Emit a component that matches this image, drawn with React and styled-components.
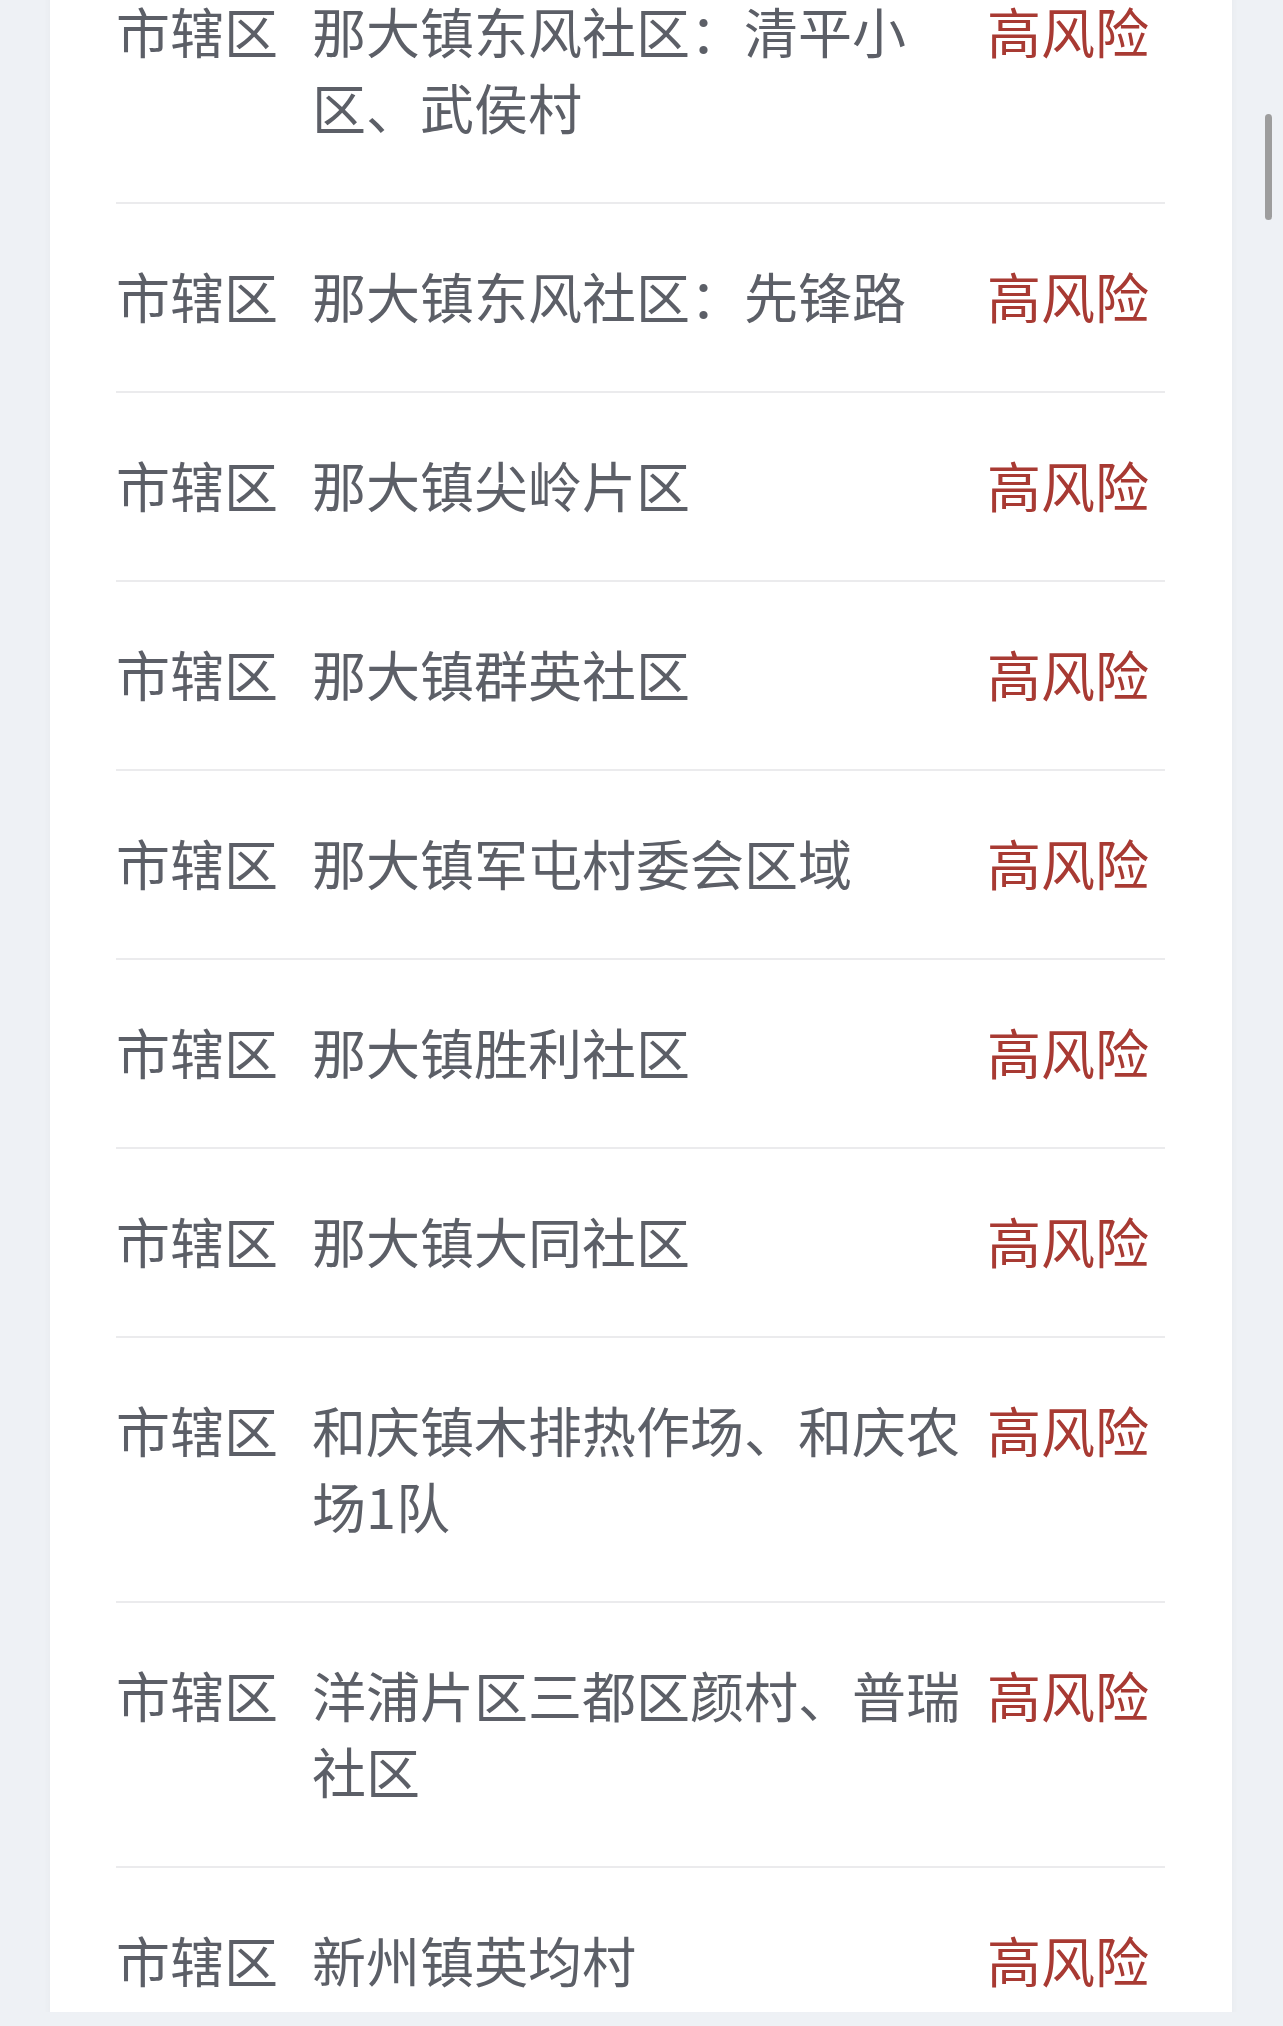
import React from "react";
import styled, { createGlobalStyle } from "styled-components";

const GlobalStyle = createGlobalStyle`
  html, body {
    margin: 0;
    padding: 0;
    background: #eef1f5;
  }
  body {
    font-family: "Noto Sans CJK SC", "Noto Sans", sans-serif;
  }
`;

const Page = styled.div`
  position: relative;
  height: 2026px;
  overflow: hidden;
  display: flex;
  flex-direction: column;
`;

const Viewport = styled.div`
  height: 2012px;
  overflow: hidden;
  padding: 0 51px 0 50px;
`;

const Card = styled.div`
  background: #ffffff;
  margin-top: -61px;
  padding: 0 67px 0 66px;
  box-shadow: 0 0 8px rgba(0, 0, 0, 0.04);
`;

const Row = styled.div`
  display: grid;
  grid-template-columns: 196px 675px 1fr;
  padding: 54px 0 57px;
  border-bottom: 2px solid ${(p) => (p.last ? "transparent" : "#ebebed")};
  font-size: 54px;
  line-height: 76px;
`;

const Cell = styled.div`
  color: ${(p) => (p.risk ? "#a83a33" : "#5c5f67")};
`;

const Scrollbar = styled.div`
  position: absolute;
  top: 114px;
  right: 11px;
  width: 7px;
  height: 106px;
  border-radius: 4px;
  background: #9d9d9d;
`;

const rows = [
  ["市辖区", "那大镇东风社区：清平小区、武侯村"],
  ["市辖区", "那大镇东风社区：先锋路"],
  ["市辖区", "那大镇尖岭片区"],
  ["市辖区", "那大镇群英社区"],
  ["市辖区", "那大镇军屯村委会区域"],
  ["市辖区", "那大镇胜利社区"],
  ["市辖区", "那大镇大同社区"],
  ["市辖区", "和庆镇木排热作场、和庆农场1队"],
  ["市辖区", "洋浦片区三都区颜村、普瑞社区"],
  ["市辖区", "新州镇英均村"],
];

export default function App() {
  return (
    <Page>
      <GlobalStyle />
      <Viewport>
        <Card>
          {rows.map(([city, area], i) => (
            <Row key={i} last={i === rows.length - 1}>
              <Cell>{city}</Cell>
              <Cell>{area}</Cell>
              <Cell risk>高风险</Cell>
            </Row>
          ))}
        </Card>
      </Viewport>
      <Scrollbar />
    </Page>
  );
}
